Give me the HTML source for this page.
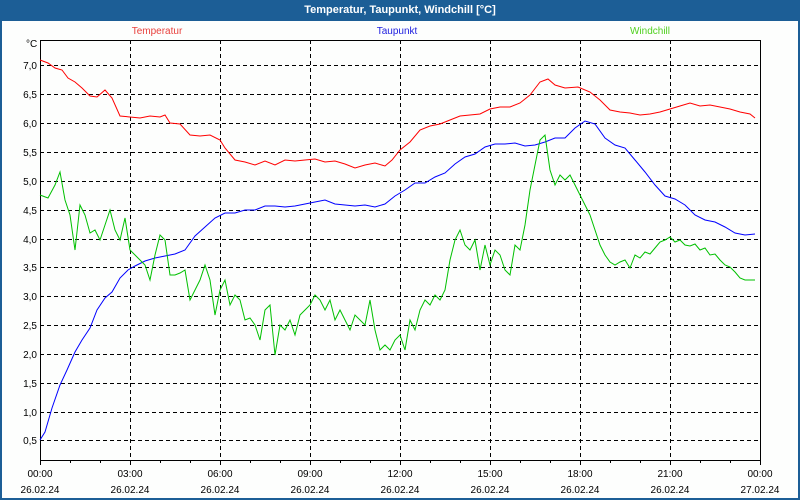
<!DOCTYPE html>
<html><head><style>
html,body{margin:0;padding:0;background:#fff;}
svg{display:block;font-family:"Liberation Sans",Tahoma,sans-serif;}
</style></head><body>
<svg width="800" height="500" xmlns="http://www.w3.org/2000/svg">
<rect x="0" y="0" width="800" height="500" fill="#1c5e96"/>
<rect x="2" y="21" width="796" height="477" fill="#fdfefd"/>
<text x="400" y="13" fill="#fff" font-size="11" font-weight="bold" text-anchor="middle">Temperatur, Taupunkt, Windchill [°C]</text>
<text x="157" y="34" fill="#e8403c" font-size="10" text-anchor="middle">Temperatur</text>
<text x="397" y="34" fill="#2020e0" font-size="10" text-anchor="middle">Taupunkt</text>
<text x="650" y="34" fill="#50d020" font-size="10" text-anchor="middle">Windchill</text>
<text x="26" y="47" fill="#000" font-size="10">°C</text>
<g stroke="#000" stroke-width="1" stroke-dasharray="4,3" shape-rendering="crispEdges">
<line x1="40" y1="65.5" x2="760" y2="65.5"/><line x1="40" y1="94.5" x2="760" y2="94.5"/><line x1="40" y1="123.5" x2="760" y2="123.5"/><line x1="40" y1="152.5" x2="760" y2="152.5"/><line x1="40" y1="181.5" x2="760" y2="181.5"/><line x1="40" y1="210.5" x2="760" y2="210.5"/><line x1="40" y1="239.5" x2="760" y2="239.5"/><line x1="40" y1="267.5" x2="760" y2="267.5"/><line x1="40" y1="296.5" x2="760" y2="296.5"/><line x1="40" y1="325.5" x2="760" y2="325.5"/><line x1="40" y1="354.5" x2="760" y2="354.5"/><line x1="40" y1="383.5" x2="760" y2="383.5"/><line x1="40" y1="412.5" x2="760" y2="412.5"/><line x1="40" y1="440.5" x2="760" y2="440.5"/>
<line x1="130.5" y1="40" x2="130.5" y2="460"/><line x1="220.5" y1="40" x2="220.5" y2="460"/><line x1="310.5" y1="40" x2="310.5" y2="460"/><line x1="400.5" y1="40" x2="400.5" y2="460"/><line x1="490.5" y1="40" x2="490.5" y2="460"/><line x1="580.5" y1="40" x2="580.5" y2="460"/><line x1="670.5" y1="40" x2="670.5" y2="460"/>
</g>
<rect x="40.5" y="40.5" width="720" height="420" fill="none" stroke="#000" stroke-width="1" shape-rendering="crispEdges"/>
<g stroke="#000" shape-rendering="crispEdges">
<path d="M40.5 460v5M70.5 460v3M100.5 460v3M130.5 460v5M160.5 460v3M190.5 460v3M220.5 460v5M250.5 460v3M280.5 460v3M310.5 460v5M340.5 460v3M370.5 460v3M400.5 460v5M430.5 460v3M460.5 460v3M490.5 460v5M520.5 460v3M550.5 460v3M580.5 460v5M610.5 460v3M640.5 460v3M670.5 460v5M700.5 460v3M730.5 460v3M760.5 460v5"/>
</g>
<g font-size="10" fill="#000" text-anchor="end">
<text x="37" y="69">7,0</text><text x="37" y="98">6,5</text><text x="37" y="127">6,0</text><text x="37" y="156">5,5</text><text x="37" y="185">5,0</text><text x="37" y="214">4,5</text><text x="37" y="243">4,0</text><text x="37" y="271">3,5</text><text x="37" y="300">3,0</text><text x="37" y="329">2,5</text><text x="37" y="358">2,0</text><text x="37" y="387">1,5</text><text x="37" y="416">1,0</text><text x="37" y="444">0,5</text>
</g>
<g font-size="10" fill="#000" text-anchor="middle">
<text x="40" y="477">00:00</text><text x="130" y="477">03:00</text><text x="220" y="477">06:00</text><text x="310" y="477">09:00</text><text x="400" y="477">12:00</text><text x="490" y="477">15:00</text><text x="580" y="477">18:00</text><text x="670" y="477">21:00</text><text x="760" y="477">00:00</text>
<text x="40" y="493">26.02.24</text><text x="130" y="493">26.02.24</text><text x="220" y="493">26.02.24</text><text x="310" y="493">26.02.24</text><text x="400" y="493">26.02.24</text><text x="490" y="493">26.02.24</text><text x="580" y="493">26.02.24</text><text x="670" y="493">26.02.24</text><text x="760" y="493">27.02.24</text>
</g>
<g fill="none" stroke-width="1">
<polyline stroke="#ff0000" points="40,60 48,63 55,68 62,70 68,78 75,82 82,88 90,96 97,97 105,90 112,98 120,116 130,117 140,118 150,116 160,117 165,115 170,123 180,124 190,135 200,136 210,135 220,140 225,148 235,160 245,162 255,165 265,161 275,165 285,160 295,161 305,160 315,159 325,162 335,161 345,164 355,168 365,165 375,163 385,166 392,160 400,150 410,142 420,130 430,126 440,124 450,120 460,116 470,115 480,114 490,109 500,107 510,107 520,103 530,95 540,82 548,79 555,85 565,88 578,87 590,92 600,100 610,110 620,112 630,113 640,115 650,114 660,112 670,109 680,106 690,103 700,106 710,105 720,107 730,109 740,112 750,114 755,118"/>
<polyline stroke="#0000ff" points="40,440 45,432 52,408 60,385 67,370 75,352 82,340 90,328 97,310 105,298 112,292 120,278 128,270 135,266 145,261 155,258 165,256 175,254 185,250 195,236 205,227 215,218 225,213 235,213 245,210 255,210 265,206 275,206 285,207 295,206 305,204 315,202 325,200 335,204 345,205 355,206 365,205 375,207 385,204 395,196 405,190 415,183 425,183 435,177 445,173 455,164 465,157 475,154 485,147 495,144 505,144 515,143 525,146 535,145 545,142 555,138 565,138 575,128 585,121 595,124 605,138 615,145 625,148 635,160 645,172 655,185 665,196 675,199 685,205 695,215 705,220 715,222 725,227 735,233 745,235 755,234"/>
<polyline stroke="#00c000" points="40,195 48,198 55,185 60,172 65,200 70,215 75,250 80,205 85,215 90,233 95,230 100,240 105,225 110,210 115,230 120,240 125,218 130,250 135,255 140,260 145,265 150,280 155,255 160,235 165,240 170,275 175,275 180,273 185,270 190,300 195,290 200,280 205,265 210,280 215,315 220,290 225,280 230,305 235,295 240,300 245,320 250,318 255,325 260,340 265,310 270,305 275,355 280,325 285,330 290,320 295,335 300,315 305,310 310,305 315,295 320,300 325,310 330,300 335,320 340,310 345,320 350,330 355,315 360,320 365,325 370,300 375,330 380,350 385,345 390,350 395,340 400,335 405,350 410,320 415,330 420,310 425,300 430,305 435,295 440,300 445,290 450,260 455,240 460,230 465,245 470,250 475,240 480,270 485,245 490,265 495,250 500,255 505,270 510,275 515,245 520,250 525,225 530,190 535,165 540,140 545,135 550,170 555,185 560,175 565,180 570,175 575,185 580,195 585,205 590,215 595,230 600,245 605,255 610,262 615,265 620,262 625,260 630,268 635,255 640,258 645,252 650,254 655,248 660,242 665,240 670,237 675,242 680,240 685,245 690,246 695,244 700,250 705,248 710,255 715,254 720,260 725,265 730,267 735,272 740,278 745,280 750,280 755,280"/>
</g>
</svg>
</body></html>
